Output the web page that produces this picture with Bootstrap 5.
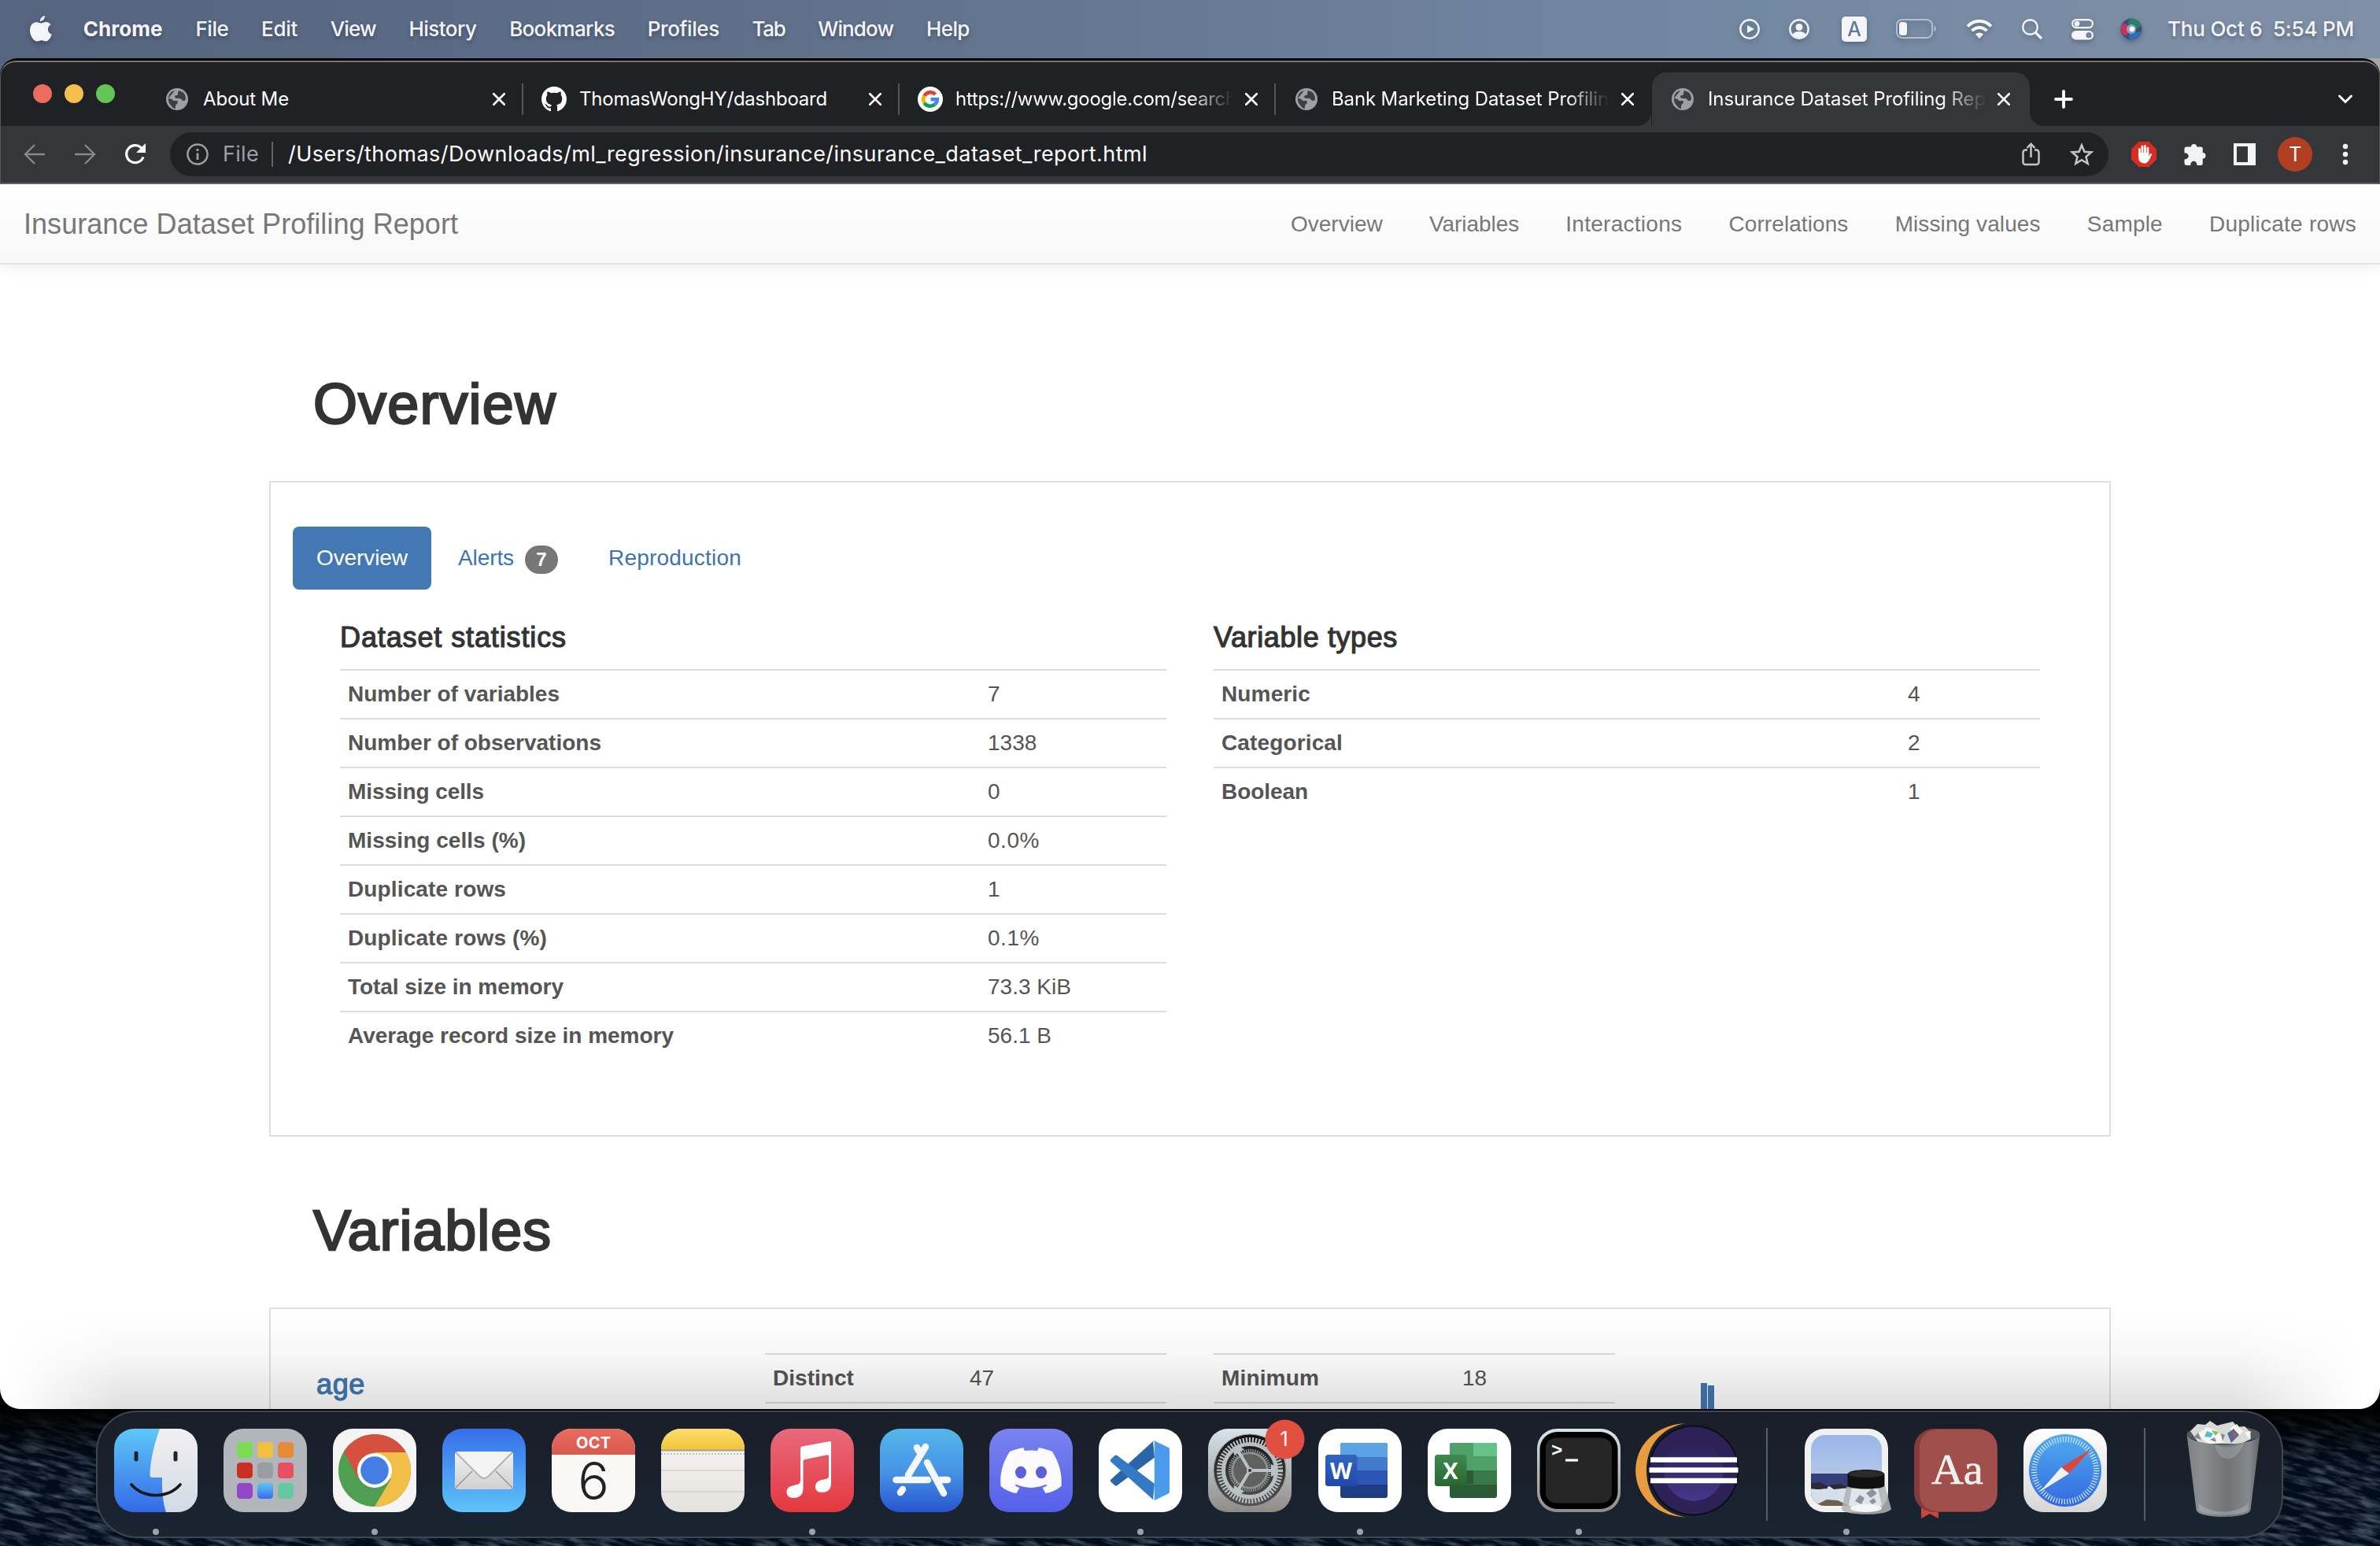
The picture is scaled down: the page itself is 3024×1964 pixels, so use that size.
<!DOCTYPE html>
<html lang="en">
<head>
<meta charset="utf-8">
<meta name="viewport" content="width=device-width, initial-scale=1">
<title>Insurance Dataset Profiling Report</title>
<link href="https://cdn.jsdelivr.net/npm/bootstrap@5.3.0/dist/css/bootstrap.min.css" rel="stylesheet">
<style>
html,body{height:100%;overflow:hidden}
body{font-family:"Liberation Sans",Arial,sans-serif;font-size:28px;line-height:40px;color:#555;background:#040d18}
svg{display:block;flex:none;overflow:visible}
.ui{font-family:Inter,"Liberation Sans",sans-serif}
.desktop{width:3024px;height:1964px}
.sea{position:absolute;left:0;bottom:0;z-index:0}
.sky{position:absolute;left:0;top:0;width:3024px;height:130px;background:linear-gradient(90deg,#56647f,#65748f 45%,#a9a6a2)}

/* menu bar */
.menubar{height:74px;padding:0 33px 0 38px;background:linear-gradient(90deg,#56647f 0,#5b6a86 20%,#64758f 43%,#7086a2 68%,#7a8ca5 85%,#7f8fa6);color:#f3f5f8;font-size:26px;font-weight:500}
.menubar .label{text-shadow:0 3px 5px rgba(0,0,0,.3)}
.menubar svg{filter:drop-shadow(0 3px 3px rgba(0,0,0,.25))}
.menus{gap:41.700px}
.menus svg{margin-right:-2px}
.status{gap:37px}
.clock{white-space:pre;margin-left:-5px}

/* browser window */
.window{height:1716px;background:#000;border-radius:22px 22px 26px 26px;padding-top:3px}
.chrome-ui{border-radius:20px 20px 0 0;border:1px solid #55565a;border-top:2px solid #76777b;border-bottom:0;background:#202124;color:#fff}
.tabstrip{height:81px;padding-left:41px}
.lights{gap:16px;height:68px;padding-bottom:14px;width:145px}
.light{width:24px;height:24px}
.tabitem{width:478px;height:68px;padding-left:23px;font-size:24px}
.tabtitle{width:353px;margin-left:16px;-webkit-mask-image:linear-gradient(90deg,#000 84%,transparent);mask-image:linear-gradient(90deg,#000 84%,transparent)}
.tabtitle.whole{-webkit-mask-image:none;mask-image:none}
.tabclose{width:46px}
.tabsep{width:2px;height:40px;background:#53555a;margin-left:6px}
.tab-on{background:#35363a;border-radius:18px 18px 0 0;width:480px}
.flare{width:18px;height:18px}
.toolbar{height:72px;background:#35363a;padding-left:29px}
.omnibox{width:2463px;height:56px;border-radius:28px;background:#202124;margin-left:29px;padding:0 19px 0 21px;font-size:27px}
.dim{color:#9aa0a6}
.omnisep{width:2px;height:32px;background:#5f6368;margin:0 19px 0 16px}
.avatar{width:44px;height:44px;background:#b04021;font-size:25px;margin-left:-5px;margin-right:5px}
.chrome-line{height:2px;background:#5f6064}

/* report page */
.page{height:1556px;background:#fff;border-radius:0 0 26px 26px}
.report-nav{height:102px;padding:2px 30px 0;border-bottom:2px solid #e4e4e4;background:linear-gradient(#fff,#f8f8f8);box-shadow:0 2px 18px rgba(0,0,0,.08);color:#777}
.report-brand{font-size:36px;color:#777}
.report-links{gap:59.200px}
.report-links a{color:#777}
.wrap{width:2340px}
.page-title{font-size:72px;line-height:80px;color:#333;padding-left:56px;-webkit-text-stroke:2.4px #333}
.title-a{padding-top:137px;padding-bottom:58px}
.title-b{padding-top:79px;padding-bottom:58px}
.box{border:2px solid #dfdfe5;padding:56px 28px 0}
.box-a{height:833px}
.box-b{height:500px}
.nav-pills{gap:4px}
.nav-pills .nav-link{padding:20px 30px;color:#3d73b0;border-radius:8px}
.nav-pills .nav-link.active{background:#4478b4;color:#fff}
.count{background:#777;color:#fff;font-weight:700;font-size:24px;line-height:24px;height:36px;width:42px;border-radius:20px;margin-left:14px;padding:6px 0;position:relative;top:2px}
.stats{--bs-gutter-x:60px}
.overview-pane{padding:41px 60px 0}
.sub{font-size:36px;line-height:40px;color:#333;margin:0 0 20px;-webkit-text-stroke:1.200px #333}
.facts{margin:0;color:#555;table-layout:fixed;--bs-table-bg:transparent}
.facts th,.facts td{padding:10px;border:0;border-top:2px solid #ddd;color:#555;height:62px}
.facts th{font-weight:700}
.varname{font-size:36px;color:#4277b1;padding-top:20px;-webkit-text-stroke:1.200px #4277b1}
.dockshade{position:absolute;left:0;right:0;bottom:0;height:120px;border-radius:0 0 26px 26px;background:linear-gradient(rgba(0,0,0,0),rgba(0,0,0,.035) 45%,rgba(0,0,0,.125));-webkit-mask-image:linear-gradient(90deg,transparent 10px,#000 150px,#000 2840px,transparent 3000px);mask-image:linear-gradient(90deg,transparent 10px,#000 150px,#000 2840px,transparent 3000px)}

/* dock */
.dock{width:2779px;height:162px;margin:2px 0 0 122px;border-radius:52px;border:2px solid #3f464f;background:linear-gradient(#1a1e28,#1a2432);padding-left:4px}
.slot{width:139.1px;padding-top:21px}
.slot svg{width:106px;height:106px}
.running{width:8px;height:8px;background:#98a2b1;margin-top:21px}
.divide{width:62px;padding-top:20px}
.divide i{width:2px;height:118px;background:#555d69}
</style>
</head>
<body>
<svg width="0" height="0" class="position-absolute">
 <defs>
  <symbol id="globe" viewBox="0 0 28 28"><circle cx="14" cy="14" r="14" fill="#9aa0a6"/><path d="M11 3C6 4 3 8 3 13c3 0 5 1 6 3h5c1 0 1 3 0 4-1 0-2 1-2 3v3c-2 0-4-2-5-3l-3-4c-1-2-1-4-1-6M16 3l5 2c3 2 4 6 4 9-1 2-2 2-4 2-1-1-2-3-4-3h-3c-2 0-3-1-3-3 1-1 2-1 3-1s1-1 1-2 0-2 1-4z" fill="#3c3e42"/></symbol>
  <symbol id="cross" viewBox="0 0 16 16"><path d="M1 1l14 14M15 1L1 15" stroke="#fff" stroke-width="2.6" stroke-linecap="round"/></symbol>
  <linearGradient id="gFind" x2="0" y2="1"><stop stop-color="#5ec8f8"/><stop offset="1" stop-color="#346ae8"/></linearGradient>
  <linearGradient id="gPale" x2="0" y2="1"><stop stop-color="#f1f0f1"/><stop offset="1" stop-color="#d2dae5"/></linearGradient>
  <linearGradient id="gMail" x2="0" y2="1"><stop stop-color="#376eea"/><stop offset="1" stop-color="#5dc4f9"/></linearGradient>
  <linearGradient id="gEnv" x2="0" y2="1"><stop stop-color="#f2f2f2"/><stop offset="1" stop-color="#cfcfd1"/></linearGradient>
  <linearGradient id="gCal" x2="0" y2="1"><stop stop-color="#ea6b5f"/><stop offset="1" stop-color="#d95a4d"/></linearGradient>
  <linearGradient id="gNote" x2="0" y2="1"><stop stop-color="#fade6e"/><stop offset="1" stop-color="#f4c338"/></linearGradient>
  <linearGradient id="gNotep" x2="0" y2="1"><stop stop-color="#f7f6f5"/><stop offset="1" stop-color="#e3e2dc"/></linearGradient>
  <linearGradient id="gMus" x2="0" y2="1"><stop stop-color="#e8697c"/><stop offset="1" stop-color="#e4383f"/></linearGradient>
  <linearGradient id="gStore" x2="0" y2="1"><stop stop-color="#54b6ea"/><stop offset=".5" stop-color="#4795e6"/><stop offset="1" stop-color="#2856cf"/></linearGradient>
  <linearGradient id="gDisc" x2="0" y2="1"><stop stop-color="#7a83ef"/><stop offset="1" stop-color="#5560ea"/></linearGradient>
  <linearGradient id="gSet" x2="0" y2="1"><stop stop-color="#d8e3ea"/><stop offset="1" stop-color="#8f8b87"/></linearGradient>
  <linearGradient id="gGear" x2="0" y2="1"><stop stop-color="#111"/><stop offset="1" stop-color="#555"/></linearGradient>
  <linearGradient id="gW" x2="0" y2="1"><stop stop-color="#3166c0"/><stop offset="1" stop-color="#1f48ab"/></linearGradient>
  <linearGradient id="gX" x2="0" y2="1"><stop stop-color="#3f8a50"/><stop offset="1" stop-color="#27672f"/></linearGradient>
  <linearGradient id="gSaf" x2="0" y2="1"><stop stop-color="#4fabef"/><stop offset="1" stop-color="#3468e0"/></linearGradient>
  <linearGradient id="gSafb" x2="0" y2="1"><stop stop-color="#fff"/><stop offset="1" stop-color="#d6d6d6"/></linearGradient>
  <linearGradient id="gSky" x2="0" y2="1"><stop stop-color="#93b4ea"/><stop offset="1" stop-color="#b5c7e8"/></linearGradient>
  <linearGradient id="gTrash"><stop stop-color="#7d8184"/><stop offset=".2" stop-color="#8b8f91"/><stop offset=".55" stop-color="#707476"/><stop offset=".85" stop-color="#85898b"/><stop offset="1" stop-color="#606467"/></linearGradient>
  <linearGradient id="gEcl" x2="0" y2="1"><stop stop-color="#2c2255"/><stop offset="1" stop-color="#47378a"/></linearGradient>
  <linearGradient id="gSea" x2="0" y2="1"><stop offset=".2" stop-color="#000"/><stop offset=".55" stop-color="#000" stop-opacity="0"/></linearGradient>
  <clipPath id="sq"><rect width="106" height="106" rx="25"/></clipPath>
  <filter id="waves" x="0" y="0" width="100%" height="100%"><feTurbulence type="fractalNoise" baseFrequency=".03 .16" numOctaves="4" seed="8"/><feColorMatrix values="0 0 0 0 .15  0 0 0 0 .2  0 0 0 0 .28  1.6 0 0 0 -.65"/></filter>
 </defs>
</svg>
<div class="desktop position-relative overflow-hidden d-flex flex-column">
 <svg class="sea" width="3024" height="220"><rect width="3024" height="220" fill="#020d1c"/><g transform="rotate(14 1512 110)"><rect x="-50" y="-400" width="3124" height="1020" filter="url(#waves)"/></g><rect width="3024" height="220" fill="url(#gSea)"/></svg>
 <div class="sky"></div>

 <header class="menubar ui d-flex align-items-center justify-content-between position-relative">
  <div class="menus d-flex align-items-center">
   <svg width="28" height="34" viewBox="0 0 28 34" fill="#f3f5f8"><path d="M19 0c.3 3-2.500 7-6 7-.3-3.500 3-6.700 6-7zM14.500 9.500C16 9.500 17.500 8 20.500 8c2.500 0 4.800 1.300 6 3.300-5.300 3.200-4.500 10.300 1.300 12.700-1.500 4-4.300 8.500-7.300 8.500-2.200 0-3-1.300-5.700-1.300s-3.600 1.300-5.600 1.300C4.500 32.500 0 25 0 18.500 0 12 4 8.200 8.300 8.200c2.900 0 4.700 1.300 6.200 1.300z"/></svg>
   <span class="label fw-bold" data-fit="101">Chrome</span>
   <span class="label" data-fit="42">File</span>
   <span class="label" data-fit="46">Edit</span>
   <span class="label" data-fit="58">View</span>
   <span class="label" data-fit="86">History</span>
   <span class="label" data-fit="134">Bookmarks</span>
   <span class="label" data-fit="91">Profiles</span>
   <span class="label" data-fit="42">Tab</span>
   <span class="label" data-fit="96">Window</span>
   <span class="label" data-fit="55">Help</span>
  </div>
  <div class="status d-flex align-items-center">
   <svg class="me-0" width="26" height="26" viewBox="0 0 26 26"><circle cx="13" cy="13" r="11.700" fill="none" stroke="#f3f5f8" stroke-width="2.400"/><path d="M10 8l9 5-9 5z" fill="#f3f5f8"/></svg>
   <svg class="me-1" width="26" height="26" viewBox="0 0 26 26"><circle cx="13" cy="13" r="11.700" fill="none" stroke="#f3f5f8" stroke-width="2.400"/><circle cx="13" cy="10.500" r="4.500" fill="#f3f5f8"/><path d="M5 20c1-3 4-4 8-4s7 1 8 4c-4 5-12 5-16 0z" fill="#f3f5f8"/></svg>
   <svg width="32" height="32" viewBox="0 0 32 32"><rect width="32" height="32" rx="5" fill="#f3f5f8"/><text x="16" y="25" text-anchor="middle" font-family="Inter" font-size="25" fill="#65799a">A</text></svg>
   <svg width="52" height="26" viewBox="0 0 52 26"><rect x="1" y="1" width="45" height="23" rx="7" fill="none" stroke="#b3bfcf" stroke-width="2"/><rect x="4" y="4" width="10" height="17" rx="3.500" fill="#f3f5f8"/><path d="M48.500 8.500c3 1 3 7 0 8z" fill="#b3bfcf"/></svg>
   <svg width="34" height="26" viewBox="0 0 34 26" fill="none" stroke="#f3f5f8" stroke-width="4"><path d="M2 9.500c8.500-9 21.500-9 30 0M7.500 15c5.500-5.500 13.500-5.500 19 0"/><path d="M17 25l-5-5.500c3-2.700 7-2.700 10 0z" fill="#f3f5f8" stroke="none"/></svg>
   <svg width="26" height="26" viewBox="0 0 26 26" fill="none" stroke="#f3f5f8" stroke-linecap="round"><circle cx="10.500" cy="10.500" r="9.300" stroke-width="2.400"/><path d="M17.500 17.500l6.500 6.500" stroke-width="3.200"/></svg>
   <svg width="28" height="28" viewBox="0 0 28 28" style="margin-right:-3px"><rect x="1.100" y="2.100" width="25.800" height="10" rx="5" fill="none" stroke="#f3f5f8" stroke-width="2.200"/><circle cx="7" cy="7.100" r="3.400" fill="#f3f5f8"/><rect y="16" width="28" height="11.500" rx="5.700" fill="#f3f5f8"/><circle cx="22" cy="21.700" r="3.600" fill="#7486a0"/></svg>
   <svg width="28" height="28" viewBox="0 0 28 28"><circle cx="14" cy="14" r="13.500" fill="#3a4f74"/><path d="M14 14C6 5 3 6 1.500 10c-1 6 0 9 3 12 4 0 7-3 9.500-8z" fill="#c5345f"/><path d="M14 14C9 7 9 2 15 .6c6 .4 10 4 11.500 8.400C24 13 19 14 14 14z" fill="#2c8068"/><path d="M14 14c4 4 8 5 13 2-1 7-7 11.500-13 11.500-4-1-4-6 0-13.500z" fill="#346cba"/><circle cx="14" cy="14" r="6" fill="#9ac4e8" opacity=".7"/><circle cx="15" cy="14" r="3.200" fill="#fff"/></svg>
   <span class="label clock" data-fit="237">Thu Oct 6  5:54 PM</span>
  </div>
 </header>

 <main class="window position-relative">
  <div class="chrome-ui ui">
   <div class="tabstrip d-flex align-items-end">
    <div class="lights d-flex align-items-center">
     <span class="light rounded-circle" style="background:#ed6a5f"></span><span class="light rounded-circle" style="background:#f5bf4f"></span><span class="light rounded-circle" style="background:#62c555"></span>
    </div>
    <div class="tabitem d-flex align-items-center"><svg width="32" height="28"><use href="#globe" x="1" width="28" height="28"/></svg><div class="tabtitle whole text-nowrap overflow-hidden"><span data-fit="109">About Me</span></div><div class="tabclose d-flex justify-content-center"><svg width="16" height="16"><use href="#cross"/></svg></div><span class="tabsep"></span></div>
    <div class="tabitem d-flex align-items-center"><svg width="32" height="32" viewBox="0 0 16 16" fill="#fff"><path d="M8 0C3.580 0 0 3.580 0 8c0 3.540 2.290 6.530 5.470 7.590.4.070.55-.17.55-.38 0-.19-.01-.82-.01-1.490-2.010.37-2.530-.49-2.690-.94-.09-.23-.48-.94-.82-1.130-.28-.15-.68-.52-.01-.53.63-.01 1.080.58 1.230.82.72 1.210 1.870.87 2.330.66.07-.52.28-.87.51-1.070-1.780-.2-3.640-.89-3.640-3.950 0-.87.31-1.590.82-2.150-.08-.2-.36-1.020.08-2.120 0 0 .67-.21 2.200.82.64-.18 1.320-.27 2-.27s1.360.09 2 .27c1.530-1.040 2.200-.82 2.200-.82.44 1.100.16 1.920.08 2.120.51.56.82 1.270.82 2.150 0 3.070-1.870 3.750-3.650 3.950.29.25.54.73.54 1.480 0 1.070-.01 1.930-.01 2.200 0 .21.15.46.55.38A8.010 8.010 0 0 0 16 8c0-4.420-3.580-8-8-8z"/></svg><div class="tabtitle whole text-nowrap overflow-hidden"><span data-fit="315">ThomasWongHY/dashboard</span></div><div class="tabclose d-flex justify-content-center"><svg width="16" height="16"><use href="#cross"/></svg></div><span class="tabsep"></span></div>
    <div class="tabitem d-flex align-items-center"><svg width="32" height="32" viewBox="0 0 32 32"><circle cx="16" cy="16" r="16" fill="#fff"/><g fill="none" stroke-width="4.600"><path d="M8.500 11.800A8.800 8.800 0 0 1 22.500 10" stroke="#db4437"/><path d="M8.500 20.800a8.800 8.800 0 0 1 0-9" stroke="#f4b400"/><path d="M21.800 22.500a8.800 8.800 0 0 1-13.300-1.700" stroke="#0f9d58"/><path d="M16.500 16.300h8.300a8.800 8.800 0 0 1-3 6.200" stroke="#4285f4"/></g></svg><div class="tabtitle text-nowrap overflow-hidden"><span data-fit="357">https://www.google.com/search</span></div><div class="tabclose d-flex justify-content-center"><svg width="16" height="16"><use href="#cross"/></svg></div><span class="tabsep"></span></div>
    <div class="tabitem d-flex align-items-center"><svg width="32" height="28"><use href="#globe" x="2" width="28" height="28"/></svg><div class="tabtitle text-nowrap overflow-hidden"><span data-fit="352">Bank Marketing Dataset Profilin</span></div><div class="tabclose d-flex justify-content-center"><svg width="16" height="16"><use href="#cross"/></svg></div><svg class="flare align-self-end" style="margin-left:-11px" viewBox="0 0 18 18"><path d="M18 0v18H0A18 18 0 0 0 18 0z" fill="#35363a"/></svg></div>
    <div class="tabitem tab-on d-flex align-items-center"><svg width="32" height="28"><use href="#globe" x="2" width="28" height="28"/></svg><div class="tabtitle text-nowrap overflow-hidden"><span data-fit="353">Insurance Dataset Profiling Rep</span></div><div class="tabclose d-flex justify-content-center"><svg width="16" height="16"><use href="#cross"/></svg></div></div>
    <svg class="flare" viewBox="0 0 18 18"><path d="M0 0v18h18A18 18 0 0 1 0 0z" fill="#35363a"/></svg>
    <div class="d-flex align-items-center justify-content-between flex-grow-1" style="height:68px;padding:0 34px 0 13px">
     <svg width="24" height="24" viewBox="0 0 24 24"><path d="M12 2v20M2 12h20" stroke="#fff" stroke-width="3.800" stroke-linecap="round"/></svg>
     <svg width="18" height="12" viewBox="0 0 18 12"><path d="M1.500 2L9 9.500 16.500 2" fill="none" stroke="#fff" stroke-width="3" stroke-linecap="round"/></svg>
    </div>
   </div>
   <div class="toolbar d-flex align-items-center">
    <svg width="28" height="26" viewBox="0 0 28 26" fill="none" stroke="#87898d" stroke-width="2.400"><path d="M27 13H2M14 1L2 13l12 12"/></svg>
    <svg width="28" height="26" viewBox="0 0 28 26" fill="none" stroke="#87898d" stroke-width="2.400" style="margin-left:36px"><path d="M1 13h25M14 1l12 12-12 12"/></svg>
    <svg width="28" height="28" viewBox="0 0 28 28" style="margin-left:36px;margin-right:1px"><path d="M24 17.500A11 11 0 1 1 22.500 7" fill="none" stroke="#fff" stroke-width="3.200"/><path d="M27 0v12H15z" fill="#fff"/></svg>
    <div class="omnibox d-flex align-items-center">
     <svg width="28" height="28" viewBox="0 0 28 28"><circle cx="14" cy="14" r="12.600" fill="none" stroke="#9aa0a6" stroke-width="2.500"/><path d="M14 12.500V21M14 7v3" stroke="#9aa0a6" stroke-width="2.800"/></svg>
     <span class="dim" style="margin-left:18px" data-fit="46">File</span><span class="omnisep"></span>
     <span class="text-nowrap" data-fit="1092">/Users/thomas/Downloads/ml_regression/insurance/insurance_dataset_report.html</span>
     <div class="ms-auto d-flex align-items-center" style="gap:37px">
      <svg width="24" height="30" viewBox="0 0 24 30" fill="none" stroke="#c3c5c8" stroke-width="2.500"><path d="M7 9.500H4.500a3 3 0 0 0-3 3V25a3 3 0 0 0 3 3h14a3 3 0 0 0 3-3V12.500a3 3 0 0 0-3-3H16M11.500 19V2M6.500 7l5-5.300 5 5.300"/></svg>
      <svg width="30" height="30" viewBox="0 0 30 30" fill="none" stroke="#c3c5c8" stroke-width="2.600"><path d="M15 3.500l3.400 8.200 8.800.700-6.700 5.800 2.100 8.600L15 22.200l-7.600 4.600 2.100-8.600-6.700-5.800 8.800-.700z"/></svg>
     </div>
    </div>
    <div class="d-flex align-items-center flex-grow-1 justify-content-between" style="padding:0 40px 0 29px">
     <svg width="32" height="32" viewBox="0 0 32 32"><path d="M9.500 0h13L32 9.500v13L22.500 32h-13L0 22.500v-13z" fill="#d62e22"/><path d="M10.500 17V9.500M14 15V6M17.500 15V5.500M21 16V8" stroke="#fff" stroke-width="2.700" stroke-linecap="round"/><path d="M9.200 14h13.100v4.500l1.700-3c1-1.200 2.500-.3 2 1-2 4-4 11-9 11-6 0-8-4-7.800-8z" fill="#fff"/></svg>
     <svg width="30" height="30" viewBox="0 0 30 30"><path d="M10 5.500a3.600 3.600 0 0 1 7.200 0h5a2.600 2.600 0 0 1 2.600 2.600v5a3.700 3.700 0 0 1 0 7.400v5.700a2.800 2.800 0 0 1-2.800 2.800h-4.500c0-7-8.300-7-8.300 0H4.500a3 3 0 0 1-3-3v-4.500c7 0 7-8.300 0-8.300V8.300a2.800 2.800 0 0 1 2.800-2.800z" fill="#f1f3f4"/></svg>
     <svg width="28" height="28" viewBox="0 0 28 28"><path fill-rule="evenodd" d="M0 0h28v28H0zM4 4v20h14V4z" fill="#f1f3f4"/></svg>
     <span class="avatar rounded-circle d-flex align-items-center justify-content-center">T</span>
     <svg width="6" height="28" viewBox="0 0 6 28" fill="#f1f3f4"><circle cx="3" cy="4" r="3.200"/><circle cx="3" cy="14" r="3.200"/><circle cx="3" cy="24" r="3.200"/></svg>
    </div>
   </div>
   <div class="chrome-line"></div>
  </div>

  <div class="page overflow-hidden">
   <nav class="report-nav d-flex align-items-center justify-content-between">
    <span class="report-brand"><span data-fit="552">Insurance Dataset Profiling Report</span></span>
    <div class="report-links d-flex">
     <a class="text-decoration-none" href="#" data-fit="117">Overview</a>
     <a class="text-decoration-none" href="#" data-fit="114">Variables</a>
     <a class="text-decoration-none" href="#" data-fit="148">Interactions</a>
     <a class="text-decoration-none" href="#" data-fit="152">Correlations</a>
     <a class="text-decoration-none" href="#" data-fit="185">Missing values</a>
     <a class="text-decoration-none" href="#" data-fit="96">Sample</a>
     <a class="text-decoration-none" href="#" data-fit="187">Duplicate rows</a>
    </div>
   </nav>
   <div class="wrap mx-auto">
    <h1 class="page-title title-a m-0 fw-normal"><span data-fit="309">Overview</span></h1>
    <section class="box box-a">
     <ul class="nav nav-pills">
      <li class="nav-item"><a class="nav-link active" href="#" data-fit="116">Overview</a></li>
      <li class="nav-item"><a class="nav-link d-flex align-items-center" href="#"><span data-fit="71">Alerts</span><span class="count text-center">7</span></a></li>
      <li class="nav-item"><a class="nav-link" href="#"><span data-fit="169">Reproduction</span></a></li>
     </ul>
     <div class="overview-pane">
      <div class="row stats">
       <div class="col-6">
        <h4 class="sub fw-normal"><span data-fit="288">Dataset statistics</span></h4>
        <table class="table facts"><colgroup><col style="width:813px"><col></colgroup><tbody>
         <tr><th><span data-fit="269">Number of variables</span></th><td>7</td></tr>
         <tr><th><span data-fit="322">Number of observations</span></th><td>1338</td></tr>
         <tr><th><span data-fit="173">Missing cells</span></th><td>0</td></tr>
         <tr><th><span data-fit="226">Missing cells (%)</span></th><td><span data-fit="66">0.0%</span></td></tr>
         <tr><th><span data-fit="201">Duplicate rows</span></th><td>1</td></tr>
         <tr><th><span data-fit="253">Duplicate rows (%)</span></th><td><span data-fit="66">0.1%</span></td></tr>
         <tr><th><span data-fit="274">Total size in memory</span></th><td><span data-fit="106">73.3 KiB</span></td></tr>
         <tr><th><span data-fit="414">Average record size in memory</span></th><td><span data-fit="81">56.1 B</span></td></tr>
        </tbody></table>
       </div>
       <div class="col-6">
        <h4 class="sub fw-normal"><span data-fit="234">Variable types</span></h4>
        <table class="table facts"><colgroup><col style="width:872px"><col></colgroup><tbody>
         <tr><th><span data-fit="113">Numeric</span></th><td>4</td></tr>
         <tr><th><span data-fit="154">Categorical</span></th><td>2</td></tr>
         <tr><th><span data-fit="110">Boolean</span></th><td>1</td></tr>
        </tbody></table>
       </div>
      </div>
     </div>
    </section>
    <h1 class="page-title title-b m-0 fw-normal"><span data-fit="303">Variables</span></h1>
    <section class="box box-b">
     <div class="row stats mx-0">
      <div class="col-3"><div class="varname"><span data-fit="62">age</span></div></div>
      <div class="col-3"><table class="table facts"><colgroup><col style="width:250px"><col></colgroup><tbody>
       <tr><th><span data-fit="103">Distinct</span></th><td>47</td></tr><tr><th></th><td></td></tr></tbody></table></div>
      <div class="col-3"><table class="table facts"><colgroup><col style="width:306px"><col></colgroup><tbody>
       <tr><th><span data-fit="124">Minimum</span></th><td>18</td></tr><tr><th></th><td></td></tr></tbody></table></div>
      <div class="col-3"><svg width="480" height="200" viewBox="0 0 480 200" fill="#4277b1"><path d="M49 38h8v160h-8zM58 41h8v160h-8z"/></svg></div>
     </div>
    </section>
   </div>
  </div>
  <div class="dockshade"></div>
 </main>

 <footer class="dock ui d-flex position-relative">
  <div class="slot d-flex flex-column align-items-center"><svg viewBox="0 0 106 106"><g clip-path="url(#sq)"><rect width="106" height="106" fill="url(#gFind)"/><path d="M58 0C50 22 46 42 45.500 58c0 3 1 4 3 4h12.500c-.500 16 1 32 5 44h40V0z" fill="url(#gPale)"/></g><path d="M28 31v8M78 31v8" stroke="#20242c" stroke-width="5" stroke-linecap="round"/><path d="M22 71c16 18 46 18 62 0" fill="none" stroke="#15181d" stroke-width="3.600" stroke-linecap="round"/></svg><span class="running rounded-circle"></span></div>
  <div class="slot d-flex flex-column align-items-center"><svg viewBox="0 0 106 106"><rect width="106" height="106" rx="25" fill="#b2b6bb"/><g><rect x="17" y="17" width="20" height="20" rx="4.500" fill="#78dd52"/><rect x="43" y="17" width="20" height="20" rx="4.500" fill="#f3bf3f"/><rect x="69" y="17" width="20" height="20" rx="4.500" fill="#e58b37"/><rect x="17" y="43" width="20" height="20" rx="4.500" fill="#c92f22"/><rect x="43" y="43" width="20" height="20" rx="4.500" fill="#979da0"/><rect x="69" y="43" width="20" height="20" rx="4.500" fill="#e84f63"/><rect x="17" y="69" width="20" height="20" rx="4.500" fill="#9446c8"/><rect x="43" y="69" width="20" height="20" rx="4.500" fill="url(#gMail)" transform="rotate(180 53 79)"/><rect x="69" y="69" width="20" height="20" rx="4.500" fill="#65c8a0"/></g></svg></div>
  <div class="slot d-flex flex-column align-items-center"><svg viewBox="0 0 106 106"><rect width="106" height="106" rx="25" fill="#f4f4f4"/><g transform="translate(53 53)"><circle r="46" fill="#4f9f53"/><path d="M0-46A46 46 0 0 1 40-23H0L-20 12-39-24A46 46 0 0 1 0-46z" fill="#d6503f"/><path d="M40-23A46 46 0 0 1 0 46L20 12 19-12 0-23z" fill="#f1bf48"/><circle r="22" fill="#fff"/><circle r="17.800" fill="#457de4"/></g></svg><span class="running rounded-circle"></span></div>
  <div class="slot d-flex flex-column align-items-center"><svg viewBox="0 0 106 106"><rect width="106" height="106" rx="25" fill="url(#gMail)"/><rect x="16" y="29" width="74" height="48" rx="4" fill="url(#gEnv)"/><path d="M17 75l21-21M89 75L68 54" stroke="#999" stroke-width="1.600"/><path d="M17 30l30 30c4 4 8 4 12 0l30-30" fill="#f3f3f3" stroke="#b2b2b4" stroke-width="1.800"/></svg></div>
  <div class="slot d-flex flex-column align-items-center"><svg viewBox="0 0 106 106"><g clip-path="url(#sq)"><rect width="106" height="106" fill="#f9f8f6"/><rect width="106" height="33" fill="url(#gCal)"/></g><text x="53" y="25" text-anchor="middle" font-size="20" font-weight="700" fill="#fff" textLength="44" font-family="Inter">OCT</text><text x="53" y="90" text-anchor="middle" font-size="66" font-weight="300" fill="#222" font-family="Inter">6</text></svg></div>
  <div class="slot d-flex flex-column align-items-center"><svg viewBox="0 0 106 106"><g clip-path="url(#sq)"><rect width="106" height="106" fill="url(#gNotep)"/><rect width="106" height="27" fill="url(#gNote)"/><path d="M0 27.500h106" stroke="#a39f92" stroke-width="1.800"/><path d="M0 32h106" stroke="#c5c4c0" stroke-width="2" stroke-dasharray="2 2"/><path d="M0 53h106M0 80h106" stroke="#d3d2d3" stroke-width="1.600"/></g></svg></div>
  <div class="slot d-flex flex-column align-items-center"><svg viewBox="0 0 106 106"><rect width="106" height="106" rx="25" fill="url(#gMus)"/><path d="M38 25.500c0-2 1-2.700 2.500-3.100L75 16c1.500-.3 2 .5 2 2v51c0 8-4 12-12 12-5 0-8-3-8-7 0-5 3-8 8-9 5-1 9-1 9-5V35.500c0-2-1-2.500-3-2L44 39c-2 .5-2.500 1-2.500 3v34c0 8-5 12-12 12-6 0-9-3-9-8s4-7 9-8c5-1 8.500-2 8.500-6z" fill="#fff"/></svg><span class="running rounded-circle"></span></div>
  <div class="slot d-flex flex-column align-items-center"><svg viewBox="0 0 106 106"><rect width="106" height="106" rx="25" fill="url(#gStore)"/><g stroke="#f4f8fd" stroke-width="8.600" stroke-linecap="round" fill="none"><path d="M47 24l3 5M36 59l22-36M60 43l21 39M20.500 65H61M77 65h9M29 77l-3 4"/></g></svg></div>
  <div class="slot d-flex flex-column align-items-center"><svg viewBox="0 0 106 106"><rect width="106" height="106" rx="25" fill="url(#gDisc)"/><path d="M43 24c-6 1-12 3-17 5C17 43 13 57 14.500 73c6 5 13 8 20 9l4-7c-2-.7-4-1.600-6-3l1.500-1.200c12 5.500 26 5.500 38 0L73.500 72c-2 1.400-4 2.300-6 3l4 7c7-1 14-4 20-9C93 57 88.500 43 80 29c-5-2-11-4-17-5l-2 4c-5-.8-11-.8-16 0z" fill="#fbfbff"/><ellipse cx="40" cy="55.500" rx="7" ry="7.800" fill="#5961d8"/><ellipse cx="66" cy="55.500" rx="7" ry="7.800" fill="#5961d8"/></svg></div>
  <div class="slot d-flex flex-column align-items-center"><svg viewBox="0 0 106 106"><rect width="106" height="106" rx="25" fill="#fff"/><path d="M69 16L15.500 64.500c-1 1-1 2 0 3l5 4.500c1 .8 2 .8 3 0L71 36.500z" fill="#2a65a8"/><path d="M69 90L15.500 42c-1-1-1-2.500 0-3.500l5-4.500c1-.8 2-.8 3 0L71 70z" fill="#3579c6"/><path d="M69 16c2-1 3 0 4 .4l15 7c1.500.8 2 1.600 2 3.600v52c0 2-.5 3-2 3.800L73 90c-1 .5-2.500.7-4 0 1.500 0 1.800-1 1.800-2.500v-69C70.800 17 70.500 16 69 16z" fill="#4a9be9"/></svg><span class="running rounded-circle"></span></div>
  <div class="slot d-flex flex-column align-items-center"><svg viewBox="0 0 106 106"><rect width="106" height="106" rx="25" fill="url(#gSet)"/><circle cx="53" cy="53" r="46" fill="url(#gGear)"/><circle cx="53" cy="53" r="46" fill="none" stroke="#999" stroke-width="1"/><g fill="none" stroke="#b7bfc3"><circle cx="53" cy="53" r="38.500" stroke-width="7" stroke-dasharray="2.200 1.800"/><circle cx="53" cy="53" r="33.500" stroke-width="5"/><circle cx="53" cy="53" r="25" stroke-width="4.500" stroke-dasharray="1.500 1.300" stroke="#8b9092"/><circle cx="53" cy="53" r="22" stroke-width="3" stroke="#8b9092"/></g><circle cx="53" cy="53" r="20.500" fill="#60615f"/><path d="M53 53h31M53 53L37 26M53 53L37 80" stroke="#bac2c6" stroke-width="4"/><path d="M80 45v16l8-4v-8zM46 26l-13 8-1-8 6-4zM46 80l-13-8-1 8 6 4z" fill="#bac2c6"/><circle cx="53" cy="53" r="4" fill="#b4bcc0"/><circle cx="53" cy="53" r="2" fill="#333"/><circle cx="97.500" cy="13.500" r="25" fill="#e14f40"/><text x="96.500" y="22" text-anchor="middle" font-size="25" fill="#fff" font-family="Inter">1</text></svg></div>
  <div class="slot d-flex flex-column align-items-center"><svg viewBox="0 0 106 106"><rect width="106" height="106" rx="25" fill="#fff"/><rect x="28" y="18" width="60" height="70" rx="3" fill="#1f3d86"/><path d="M28 35h60v36H28z" fill="#2c56b5"/><path d="M28 35h60v18H28z" fill="#437acd"/><path d="M31 18h54a3 3 0 0 1 3 3v15H28V21a3 3 0 0 1 3-3z" fill="#5ba2e7"/><rect x="9" y="33" width="40.500" height="40" rx="3.500" fill="url(#gW)"/><text x="29" y="63.500" text-anchor="middle" font-size="29" font-weight="700" fill="#fff" textLength="28" lengthAdjust="spacingAndGlyphs" font-family="Open Sans">W</text></svg><span class="running rounded-circle"></span></div>
  <div class="slot d-flex flex-column align-items-center"><svg viewBox="0 0 106 106"><rect width="106" height="106" rx="25" fill="#fff"/><rect x="28" y="18" width="60" height="70" rx="3" fill="#2b5a36"/><path d="M28 35h60v36H28z" fill="#387a47"/><path d="M28 35h30v18H28z" fill="#387a47"/><path d="M58 35h30v18H58z" fill="#4fa169"/><path d="M31 18h27v35H28V21a3 3 0 0 1 3-3z" fill="#4fa169"/><path d="M58 18h27a3 3 0 0 1 3 3v14H58z" fill="#65c187"/><path d="M28 53h30v17H28z" fill="#2b5a36"/><rect x="9" y="33" width="40.500" height="40" rx="3.500" fill="url(#gX)"/><text x="29" y="63.500" text-anchor="middle" font-size="29" font-weight="700" fill="#fff" font-family="Open Sans">X</text></svg></div>
  <div class="slot d-flex flex-column align-items-center"><svg viewBox="0 0 106 106"><rect width="106" height="106" rx="25" fill="url(#gSet)"/><rect x="3.500" y="4" width="99" height="98" rx="22" fill="#000"/><rect x="11" y="11.500" width="84" height="83" rx="13" fill="#262626"/><text x="18" y="35" font-size="24" font-weight="700" fill="#fff" font-family="Liberation Mono">&gt;</text><path d="M36 40h16" stroke="#fff" stroke-width="3.200"/></svg><span class="running rounded-circle"></span></div>
  <div class="slot d-flex flex-column align-items-center"><svg viewBox="0 0 106 106"><path d="M50-7C-35-2-35 108 50 112.500 22 108 0 88 0 53S22-2 50-7z" fill="#e99b40"/><circle cx="60" cy="53" r="57.500" fill="#0e0c1c"/><circle cx="60" cy="53" r="55.500" fill="#2c2255"/><circle cx="60" cy="54" r="38" fill="url(#gEcl)"/><path d="M5 39.500h110M3.500 52.500h113M5 66h110" stroke="#fff" stroke-width="6.600"/></svg></div>
  <div class="divide d-flex justify-content-center"><i></i></div>
  <div class="slot d-flex flex-column align-items-center"><svg viewBox="0 0 106 106"><rect width="106" height="106" rx="25" fill="#f1f1f1"/><clipPath id="ph"><rect x="8" y="8" width="90" height="90" rx="18"/></clipPath><g clip-path="url(#ph)"><rect width="106" height="60" fill="url(#gSky)"/><rect y="57" width="106" height="50" fill="#33407c"/><path d="M0 76l20 1 15-5 20 4 45-3v30H0z" fill="#d4dfe8"/><path d="M8 69l12-1 9 5v3l-14 1-7-2zM30 72l15-2 12 5-20 2z" fill="#2c2b35"/><path d="M14 97l14-7 14 1 14 7-6 6H14z" fill="#6e6050"/></g><path d="M53 74l-6 28c0 8 57 10 63 0l-8-30z" fill="#aeb3b4" opacity=".85"/><path d="M60 75l-4 22c8 6 35 6 42 0l-5-22z" fill="#dfe5e8"/><path d="M64 92l6-8 6 4-4 8zM78 82l8-6 6 6-8 6zM82 92l6-4 3 5-5 3z" fill="#8e9499"/><ellipse cx="78" cy="101" rx="20" ry="5" fill="#f5f5f5"/><path d="M54.500 58c0-8 47-8 47 0v14c0 6-47 6-47 0z" fill="#101010"/><ellipse cx="78" cy="57.500" rx="22" ry="4.500" fill="#2b2b2b"/></svg><span class="running rounded-circle"></span></div>
  <div class="slot d-flex flex-column align-items-center"><svg viewBox="0 0 106 106"><path d="M9 95v19l11-6 11 6V95z" fill="#c8463a"/><rect width="106" height="106" rx="25" fill="#843c3b"/><rect x="7" y="1" width="98.500" height="104" rx="22" fill="#a14f4d"/><text x="55" y="70" text-anchor="middle" font-size="55" fill="#f1efee" font-family="Liberation Serif" textLength="66" lengthAdjust="spacingAndGlyphs" stroke="#f1efee" stroke-width=".6">Aa</text></svg></div>
  <div class="slot d-flex flex-column align-items-center"><svg viewBox="0 0 106 106"><rect width="106" height="106" rx="25" fill="url(#gSafb)"/><circle cx="53" cy="53" r="46" fill="url(#gSaf)"/><circle cx="53" cy="53" r="39.500" fill="none" stroke="#d5e8fa" stroke-width="7" stroke-dasharray="1.200 2.247"/><path d="M86 26L58 57 48 49z" fill="#d8483f"/><path d="M21 80l27-31 10 8z" fill="#f2f2f2"/></svg></div>
  <div class="divide d-flex justify-content-center"><i></i></div>
  <div class="slot d-flex flex-column align-items-center"><svg viewBox="0 0 106 106"><ellipse cx="53" cy="7" rx="46.500" ry="11" fill="#53585c"/><path d="M11 3l9-9 10 1 6-5 9 6 8-2 12-3 6 7 9-1 7 7 1 9-12 6H22z" fill="#d9d9d6"/><path d="M20 7l12-9 14 5 8 14-20 3zM62-1l8-5 8 10-12 10zM80 5l8-2-2 10z" fill="#f6f6f4"/><path d="M32 3l8 3-3 5-8-1z" fill="#4bbfd0"/><path d="M38 2l9 2-4 5z" fill="#7cc454"/><path d="M58 6l8-6 7 8-10 10z" fill="#536a9e"/><path d="M64 2l6 6-4 4z" fill="#b75b38"/><path d="M15 11l6-6 4 9zM36 14l6-3 2 6zM50 6l2 10 3-8z" fill="#88888a"/><path d="M6.500 7c4 17 89 17 93 0l-12 96c-2 12-67 12-69 0z" fill="url(#gTrash)"/><path d="M42 20c10 6 26 3 38-2-6 12-14 22-24 20-8-2-12-10-14-18z" fill="#a6aaac" opacity=".45"/><path d="M21 95c18 14 46 14 64 0l-1 8c-6 9-56 9-62 0z" fill="#bfc3c5" opacity=".4"/></svg></div>
 </footer>
</div>
<script src="https://cdn.jsdelivr.net/npm/bootstrap@5.3.0/dist/js/bootstrap.bundle.min.js"></script>
<script>
// Track each label so that its text spans the width given in data-fit.
document.querySelectorAll('[data-fit]').forEach(function (el) {
  var r = document.createRange();
  r.selectNodeContents(el);
  var n = el.textContent.length;
  el.style.letterSpacing = ((+el.dataset.fit - r.getBoundingClientRect().width) / n).toFixed(3) + 'px';
  el.style.whiteSpace = 'pre';
});
</script>
</body>
</html>
